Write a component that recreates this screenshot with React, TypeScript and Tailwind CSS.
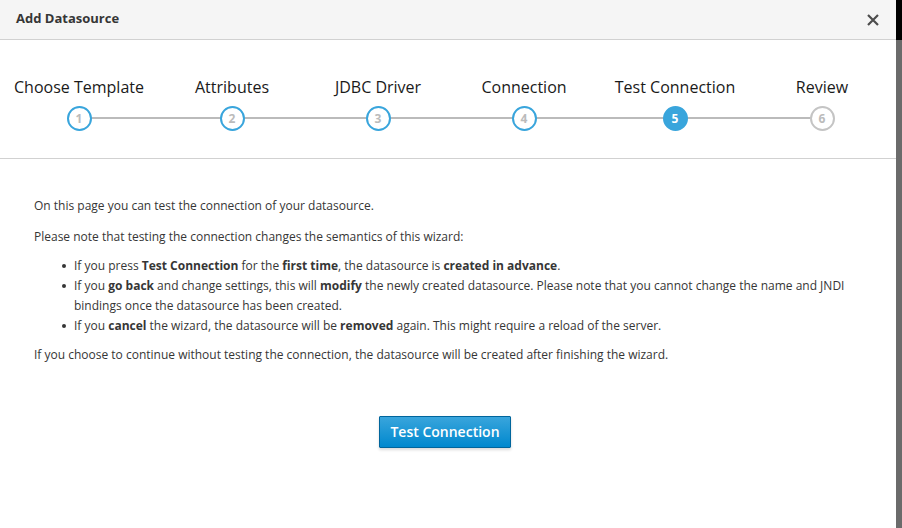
import React from "react";

const steps = [
  { n: 1, label: "Choose Template", state: "done" },
  { n: 2, label: "Attributes", state: "done" },
  { n: 3, label: "JDBC Driver", state: "done" },
  { n: 4, label: "Connection", state: "done" },
  { n: 5, label: "Test Connection", state: "active" },
  { n: 6, label: "Review", state: "todo" },
];

function StepCircle({ n, state }: { n: number; state: string }) {
  if (state === "active") {
    return (
      <div className="w-[25px] h-[25px] rounded-full bg-[#39a5dc] border-2 border-[#39a5dc] flex items-center justify-center text-[12px] font-bold text-white">
        {n}
      </div>
    );
  }
  return (
    <div
      className={
        "w-[25px] h-[25px] rounded-full bg-white border-2 flex items-center justify-center text-[12px] font-bold text-[#bbbbbb] " +
        (state === "done" ? "border-[#39a5dc]" : "border-[#c4c4c4]")
      }
    >
      {n}
    </div>
  );
}

function Bullet({ children }: { children: React.ReactNode }) {
  return (
    <li className="flex">
      <span className="w-[40px] shrink-0 flex justify-end pr-[8px] pt-[8px]">
        <span className="w-[4px] h-[4px] rounded-full bg-[#363636]" />
      </span>
      <span>{children}</span>
    </li>
  );
}

export default function App() {
  return (
    <div className="flex w-[902px] h-[528px] overflow-hidden font-['Open_Sans',sans-serif]">
      {/* Modal */}
      <div className="w-[896px] h-full bg-white flex flex-col">
        {/* Header */}
        <div className="h-[40px] bg-[#f5f5f5] border-b border-[#d1d1d1] flex items-center justify-between pl-[16px] pr-[17px]">
          <span className="text-[13px] font-bold text-[#363636] -mt-[2px]">Add Datasource</span>
          <svg width="12" height="12" viewBox="0 0 12 12" className="text-[#4d4d4d]">
            <path d="M1 1L11 11M11 1L1 11" stroke="currentColor" strokeWidth="2.2" />
          </svg>
        </div>

        {/* Steps */}
        <div className="h-[119px] border-b border-[#d1d1d1] pl-[4px] pt-[36px] relative">
          <div className="absolute left-[79px] right-[74px] top-[77px] h-[2px] bg-[#bbbbbb]" />
          <div className="grid grid-cols-[150px_156px_136px_156px_146px_148px] relative">
            {steps.map((s) => (
              <div key={s.n} className="flex flex-col items-center">
                <span className="text-[16px] leading-[22px] text-[#1a1a1a] whitespace-nowrap">{s.label}</span>
                <div className="mt-[8px]">
                  <StepCircle n={s.n} state={s.state} />
                </div>
              </div>
            ))}
          </div>
        </div>

        {/* Body */}
        <div className="px-[34px] pt-[37px] text-[12px] leading-[20px] text-[#363636]">
          <p className="mb-[11px]">On this page you can test the connection of your datasource.</p>
          <p className="mb-[9px]">Please note that testing the connection changes the semantics of this wizard:</p>
          <ul className="mb-[9px]">
            <Bullet>
              If you press <b>Test Connection</b> for the <b>first time</b>, the datasource is{" "}
              <b>created in advance</b>.
            </Bullet>
            <Bullet>
              If you <b>go back</b> and change settings, this will <b>modify</b> the newly created datasource.
              Please note that you cannot change the name and JNDI bindings once the datasource has been created.
            </Bullet>
            <Bullet>
              If you <b>cancel</b> the wizard, the datasource will be <b>removed</b> again. This might require a
              reload of the server.
            </Bullet>
          </ul>
          <p>If you choose to continue without testing the connection, the datasource will be created after finishing the wizard.</p>

          <div className="flex justify-center mt-[51px] pr-[6px]">
            <button className="h-[32px] px-[10px] text-[14px] font-semibold text-white border border-[#00659c] rounded-[1px] bg-[linear-gradient(#39a5dc,#0088ce)] shadow-[0_2px_3px_rgba(0,0,0,0.15)]">
              Test Connection
            </button>
          </div>
        </div>
      </div>

      {/* Backdrop strip */}
      <div className="flex-1 flex flex-col">
        <div className="h-[40px] bg-black" />
        <div className="flex-1 bg-[#6b6b6b]" />
      </div>
    </div>
  );
}
